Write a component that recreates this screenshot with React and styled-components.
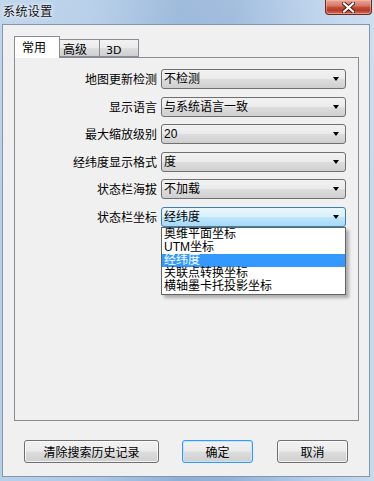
import React from 'react';
import styled, { createGlobalStyle, css } from 'styled-components';

const GlobalStyle = createGlobalStyle`
  html, body {
    margin: 0;
    padding: 0;
    background: #ffffff;
  }
  body {
    font-family: "Liberation Sans", "Noto Sans CJK SC", sans-serif;
    font-size: 12px;
    color: #000;
  }
`;

const win7Gradient = css`
  background: linear-gradient(
    to bottom,
    #f2f2f2 0%,
    #ebebeb 48%,
    #dddddd 52%,
    #cfcfcf 100%
  );
`;

const Window = styled.div`
  width: 374px;
  height: 481px;
  display: flex;
  flex-direction: column;
  box-sizing: border-box;
  background:
    linear-gradient(180deg, rgba(255, 255, 255, 0.15) 0%, rgba(255, 255, 255, 0) 40%),
    linear-gradient(90deg, #b7d0ea 0%, #adc8e6 25%, #8fb0d6 48%, #93b3d8 62%, #b2cbe8 82%, #c6daef 100%);
`;

const TitleBar = styled.div`
  height: 24px;
  display: flex;
  align-items: flex-start;
  flex-shrink: 0;
`;

const Title = styled.div`
  padding: 4px 0 0 3px;
  font-family: "Noto Sans CJK SC", sans-serif;
  font-size: 12px;
  line-height: 13px;
  letter-spacing: 0.4px;
  color: #111;
  text-shadow: 0 0 6px rgba(255, 255, 255, 0.9), 0 0 3px rgba(255, 255, 255, 0.9);
`;

const CloseButton = styled.div`
  margin-left: auto;
  margin-right: 2px;
  width: 47px;
  height: 15px;
  box-sizing: border-box;
  border: 1px solid #6b2a22;
  border-top: none;
  border-radius: 0 0 4px 4px;
  background: linear-gradient(to bottom, #e9a797 0%, #d77a66 40%, #c14a33 55%, #b83a27 75%, #d4775a 100%);
  box-shadow: inset 0 0 0 1px rgba(255, 200, 190, 0.45);
  display: flex;
  align-items: center;
  justify-content: center;
`;

const Client = styled.div`
  flex: 1;
  margin: 0 4px 4px 2px;
  border: 1px solid #8596aa;
  background: #f0f0f0;
  display: flex;
  flex-direction: column;
  padding: 11px 0 0 11px;
  box-sizing: border-box;
`;

const TabRow = styled.div`
  display: flex;
  align-items: flex-end;
  height: 21px;
  position: relative;
  z-index: 1;
`;

const Tab = styled.div`
  box-sizing: border-box;
  width: ${(p) => p.$w}px;
  height: ${(p) => (p.$active ? 22 : 18)}px;
  margin-left: ${(p) => (p.$first ? 0 : -1)}px;
  margin-bottom: ${(p) => (p.$active ? -1 : 0)}px;
  padding-left: ${(p) => p.$pl}px;
  padding-top: ${(p) => (p.$active ? 2 : 1)}px;
  border: 1px solid #898c95;
  border-bottom: ${(p) => (p.$active ? 'none' : '1px solid #898c95')};
  font-family: "Noto Sans CJK SC", sans-serif;
  font-size: 12px;
  line-height: 15px;
  position: relative;
  z-index: ${(p) => (p.$active ? 2 : 1)};
  ${(p) => (p.$active ? 'background: #ffffff;' : win7Gradient)}
`;

const TabLatin = styled.span`
  font-family: "DejaVu Sans", sans-serif;
  font-size: 11px;
`;

const Panel = styled.div`
  width: 345px;
  height: 364px;
  box-sizing: border-box;
  border: 1px solid #898c95;
  background: #f0f0f0;
  padding-top: 11px;
`;

const Form = styled.div`
  display: grid;
  grid-template-columns: 142px 185px;
  column-gap: 4px;
  row-gap: 7.6px;
  grid-auto-rows: 20px;
`;

const Label = styled.div`
  text-align: right;
  font-family: "Noto Sans CJK SC", sans-serif;
  font-size: 12px;
  line-height: 20px;
  white-space: nowrap;
`;

const ComboWrap = styled.div`
  position: relative;
`;

const Combo = styled.div`
  box-sizing: border-box;
  height: 20px;
  border: 1px solid ${(p) => (p.$focus ? '#3c7fb1' : '#707070')};
  border-radius: 3px;
  padding: 0 0 0 2px;
  display: flex;
  align-items: center;
  font-family: "Liberation Sans", "Noto Sans CJK SC", sans-serif;
  font-size: 12px;
  line-height: 18px;
  ${(p) =>
    p.$focus
      ? css`
          background: linear-gradient(to bottom, #eaf6fd 0%, #d9f0fc 48%, #bee6fd 52%, #a7d9f5 100%);
        `
      : win7Gradient}
`;

const ComboText = styled.span`
  flex: 1;
  white-space: nowrap;
`;

const Arrow = styled.span`
  width: 0;
  height: 0;
  margin-right: 6px;
  border-left: 3.5px solid transparent;
  border-right: 3.5px solid transparent;
  border-top: 4px solid #000;
`;

const DropList = styled.div`
  position: absolute;
  top: 100%;
  left: 0;
  width: 185px;
  box-sizing: border-box;
  border: 1px solid #646464;
  background: #ffffff;
  box-shadow: 3px 3px 3px rgba(0, 0, 0, 0.28);
  padding: 0 0 1px;
  z-index: 5;
`;

const DropItem = styled.div`
  height: 13px;
  line-height: 13px;
  padding-left: 2px;
  font-family: "Liberation Sans", "Noto Sans CJK SC", sans-serif;
  font-size: 12px;
  white-space: nowrap;
  color: ${(p) => (p.$sel ? '#ffffff' : '#000000')};
  background: ${(p) => (p.$sel ? '#3399ff' : 'transparent')};
`;

const ButtonRow = styled.div`
  display: flex;
  margin-top: 19px;
  padding-left: 10px;
  gap: 23px;
`;

const Button = styled.div`
  box-sizing: border-box;
  width: ${(p) => p.$w}px;
  height: 23px;
  margin-left: ${(p) => p.$ml || 0}px;
  border: 1px solid ${(p) => (p.$primary ? '#3399ff' : '#707070')};
  border-radius: 3px;
  display: flex;
  align-items: center;
  justify-content: center;
  font-family: "Noto Sans CJK SC", sans-serif;
  font-size: 12px;
  ${win7Gradient}
  box-shadow: ${(p) =>
    p.$primary ? 'inset 0 0 0 1px #bfe6fa' : 'inset 0 0 0 1px rgba(255,255,255,0.7)'};
`;

const rows = [
  { label: '地图更新检测', value: '不检测' },
  { label: '显示语言', value: '与系统语言一致' },
  { label: '最大缩放级别', value: '20' },
  { label: '经纬度显示格式', value: '度' },
  { label: '状态栏海拔', value: '不加载' },
  { label: '状态栏坐标', value: '经纬度', open: true },
];

const options = ['奥维平面坐标', 'UTM坐标', '经纬度', '关联点转换坐标', '横轴墨卡托投影坐标'];

export default function App() {
  return (
    <>
      <GlobalStyle />
      <Window>
        <TitleBar>
          <Title>系统设置</Title>
          <CloseButton>
            <svg width="13" height="11" viewBox="0 0 13 11">
              <path
                d="M2 1.5 L11 9.5 M11 1.5 L2 9.5"
                stroke="#4a1a12"
                strokeWidth="4"
                strokeLinecap="square"
              />
              <path
                d="M2 1.5 L11 9.5 M11 1.5 L2 9.5"
                stroke="#ffffff"
                strokeWidth="2.2"
                strokeLinecap="square"
              />
            </svg>
          </CloseButton>
        </TitleBar>
        <Client>
          <TabRow>
            <Tab $active $first $w={46} $pl={7}>常用</Tab>
            <Tab $w={41} $pl={3}>高级</Tab>
            <Tab $w={40} $pl={6}><TabLatin>3D</TabLatin></Tab>
          </TabRow>
          <Panel>
            <Form>
              {rows.map((r) => (
                <React.Fragment key={r.label}>
                  <Label>{r.label}</Label>
                  <ComboWrap>
                    <Combo $focus={r.open}>
                      <ComboText>{r.value}</ComboText>
                      <Arrow />
                    </Combo>
                    {r.open && (
                      <DropList>
                        {options.map((o) => (
                          <DropItem key={o} $sel={o === r.value}>{o}</DropItem>
                        ))}
                      </DropList>
                    )}
                  </ComboWrap>
                </React.Fragment>
              ))}
            </Form>
          </Panel>
          <ButtonRow>
            <Button $w={135}>清除搜索历史记录</Button>
            <Button $w={71} $primary>确定</Button>
            <Button $w={71} $ml={1}>取消</Button>
          </ButtonRow>
        </Client>
      </Window>
    </>
  );
}
